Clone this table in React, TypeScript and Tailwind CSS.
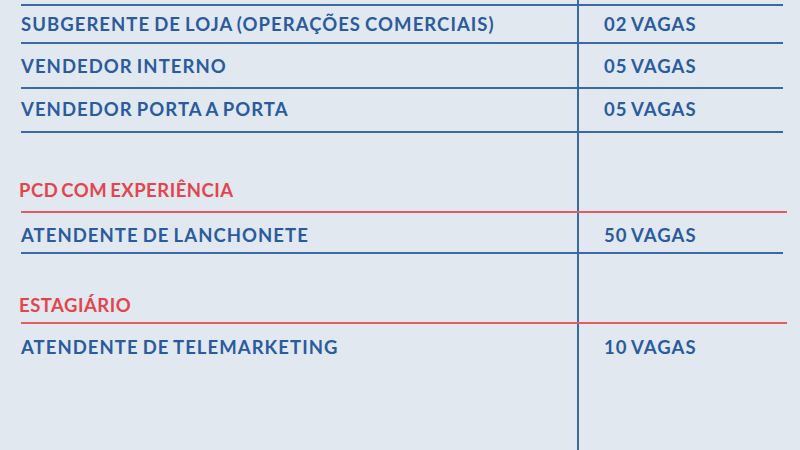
const blue = 'text-[#2a5b9e]';
const txt = 'text-[18.5px] font-bold tracking-[1.05px] [word-spacing:-1.5px]';

type Row = { label: string; vagas?: string; kind: 'job' | 'head'; h: string; pad: string };

const rows: Row[] = [
  { label: 'SUBGERENTE DE LOJA (OPERAÇÕES COMERCIAIS)', vagas: '02 VAGAS', kind: 'job', h: 'h-[36px]', pad: 'pt-[2px]' },
  { label: 'VENDEDOR INTERNO', vagas: '05 VAGAS', kind: 'job', h: 'h-[43px]', pad: 'pt-[3px]' },
  { label: 'VENDEDOR PORTA A PORTA', vagas: '05 VAGAS', kind: 'job', h: 'h-[42px]', pad: 'pt-0' },
  { label: 'PCD COM EXPERIÊNCIA', kind: 'head', h: 'h-[78px]', pad: 'pt-[44px]' },
  { label: 'ATENDENTE DE LANCHONETE', vagas: '50 VAGAS', kind: 'job', h: 'h-[39px]', pad: 'pt-[6px]' },
  { label: 'ESTAGIÁRIO', kind: 'head', h: 'h-[68px]', pad: 'pt-[38px]' },
];

function App() {
  return (
    <div
      className="w-[800px] h-[450px] bg-[#e1e8f0] flex flex-col overflow-hidden"
      style={{ fontFamily: 'Lato, "Open Sans", sans-serif' }}
    >
      <div className="flex h-[4px]">
        <div className="w-[577px]" />
        <div className="w-[2px] bg-[#3a6aa6]" />
      </div>
      <div className="ml-[21px] mr-[17px] h-[2px] bg-[#3a6aa6]" />
      {rows.map((r) => (
        <div key={r.label}>
          <div className={`flex ${r.h}`}>
            {r.kind === 'head' ? (
              <div className={`w-[558px] ml-[19px] ${r.pad} text-[18.5px] font-bold tracking-[0.5px] [word-spacing:-2px] text-[#e1464e]`}>
                {r.label}
              </div>
            ) : (
              <div className={`w-[556px] ml-[21px] flex items-center ${r.pad} ${txt} ${blue}`}>{r.label}</div>
            )}
            <div className="w-[2px] bg-[#3a6aa6]" />
            <div className={`flex-1 pl-[25px] flex items-center ${r.pad} ${txt} ${blue}`}>
              {r.vagas}
            </div>
          </div>
          {r.kind === 'head' ? (
            <div className="ml-[21px] mr-[13px] h-[2px] bg-[#e35c60]" />
          ) : (
            <div className="ml-[21px] mr-[17px] h-[2px] bg-[#3a6aa6]" />
          )}
        </div>
      ))}
      <div className="flex flex-1">
        <div className={`w-[556px] ml-[21px] pt-[10px] ${txt} ${blue}`}>
          ATENDENTE DE TELEMARKETING
        </div>
        <div className="w-[2px] bg-[#3a6aa6]" />
        <div className={`flex-1 pl-[25px] pt-[10px] ${txt} ${blue}`}>10 VAGAS</div>
      </div>
    </div>
  );
}

export default App;
